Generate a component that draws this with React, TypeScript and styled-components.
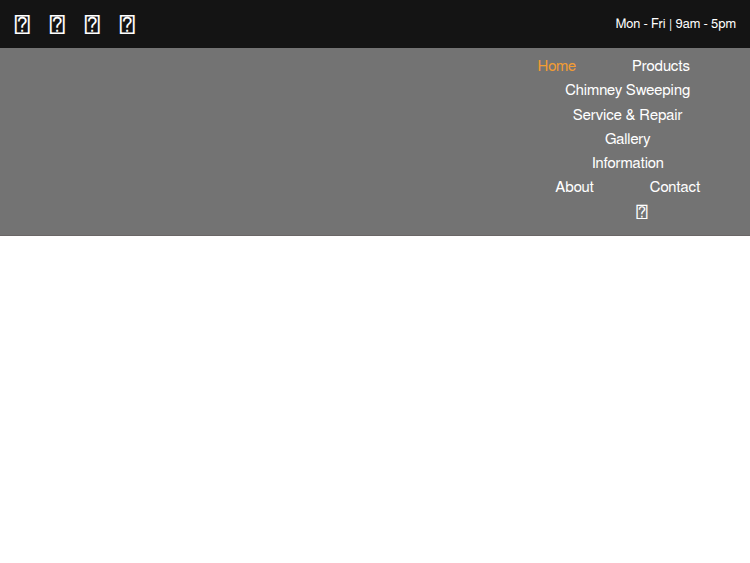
import React from "react";
import styled, { createGlobalStyle } from "styled-components";

const GlobalStyle = createGlobalStyle`
  * { box-sizing: border-box; }
  body {
    margin: 0;
    background: #ffffff;
    font-family: FreeSans, "Liberation Sans", Arial, sans-serif;
    font-size: 15px;
    line-height: 24px;
  }
`;

const TopBar = styled.div`
  display: flex;
  align-items: center;
  justify-content: space-between;
  min-height: 48px;
  padding: 2px 14px 0;
  background: #141414;
  color: #ffffff;
`;

const SocialLinks = styled.div`
  display: flex;
  gap: 19px;
`;

const SocialLink = styled.a`
  color: inherit;
  font-size: 20px;
  text-decoration: none;
`;

const Hours = styled.span`
  font-size: 13px;
`;

const Header = styled.header`
  display: flex;
  justify-content: flex-end;
  padding: 7px 14px 10px;
  background: #737373;
  border-bottom: 1px solid #6a6666;
  box-shadow: 0 1px 0 #c4c2c2;
`;

const Menu = styled.nav`
  display: flex;
  flex-wrap: wrap;
  justify-content: center;
  width: 30%;
  min-height: 170px;
`;

const MenuLink = styled.a<{ $active?: boolean }>`
  padding: 0 28px;
  color: ${({ $active }) => ($active ? "#f29c33" : "#ffffff")};
  text-decoration: none;
  white-space: nowrap;

  &:first-child { padding-left: 0; }
  &:last-child { padding-right: 0; }
`;

const socials = [
  { name: "Facebook", glyph: "\uf09a" },
  { name: "Twitter", glyph: "\uf099" },
  { name: "Instagram", glyph: "\uf16d" },
  { name: "YouTube", glyph: "\uf167" },
];

const pages = [
  "Home",
  "Products",
  "Chimney Sweeping",
  "Service & Repair",
  "Gallery",
  "Information",
  "About",
  "Contact",
];

export default function App() {
  return (
    <>
      <GlobalStyle />
      <TopBar>
        <SocialLinks>
          {socials.map(({ name, glyph }) => (
            <SocialLink key={name} href="#" aria-label={name}>
              {glyph}
            </SocialLink>
          ))}
        </SocialLinks>
        <Hours>Mon - Fri | 9am - 5pm</Hours>
      </TopBar>
      <Header>
        <Menu aria-label="Main">
          {pages.map((page) => (
            <MenuLink
              key={page}
              href="#"
              $active={page === "Home"}
              aria-current={page === "Home" ? "page" : undefined}
            >
              {page}
            </MenuLink>
          ))}
          <MenuLink href="#" aria-label="Search">
            {"\uf002"}
          </MenuLink>
        </Menu>
      </Header>
    </>
  );
}
